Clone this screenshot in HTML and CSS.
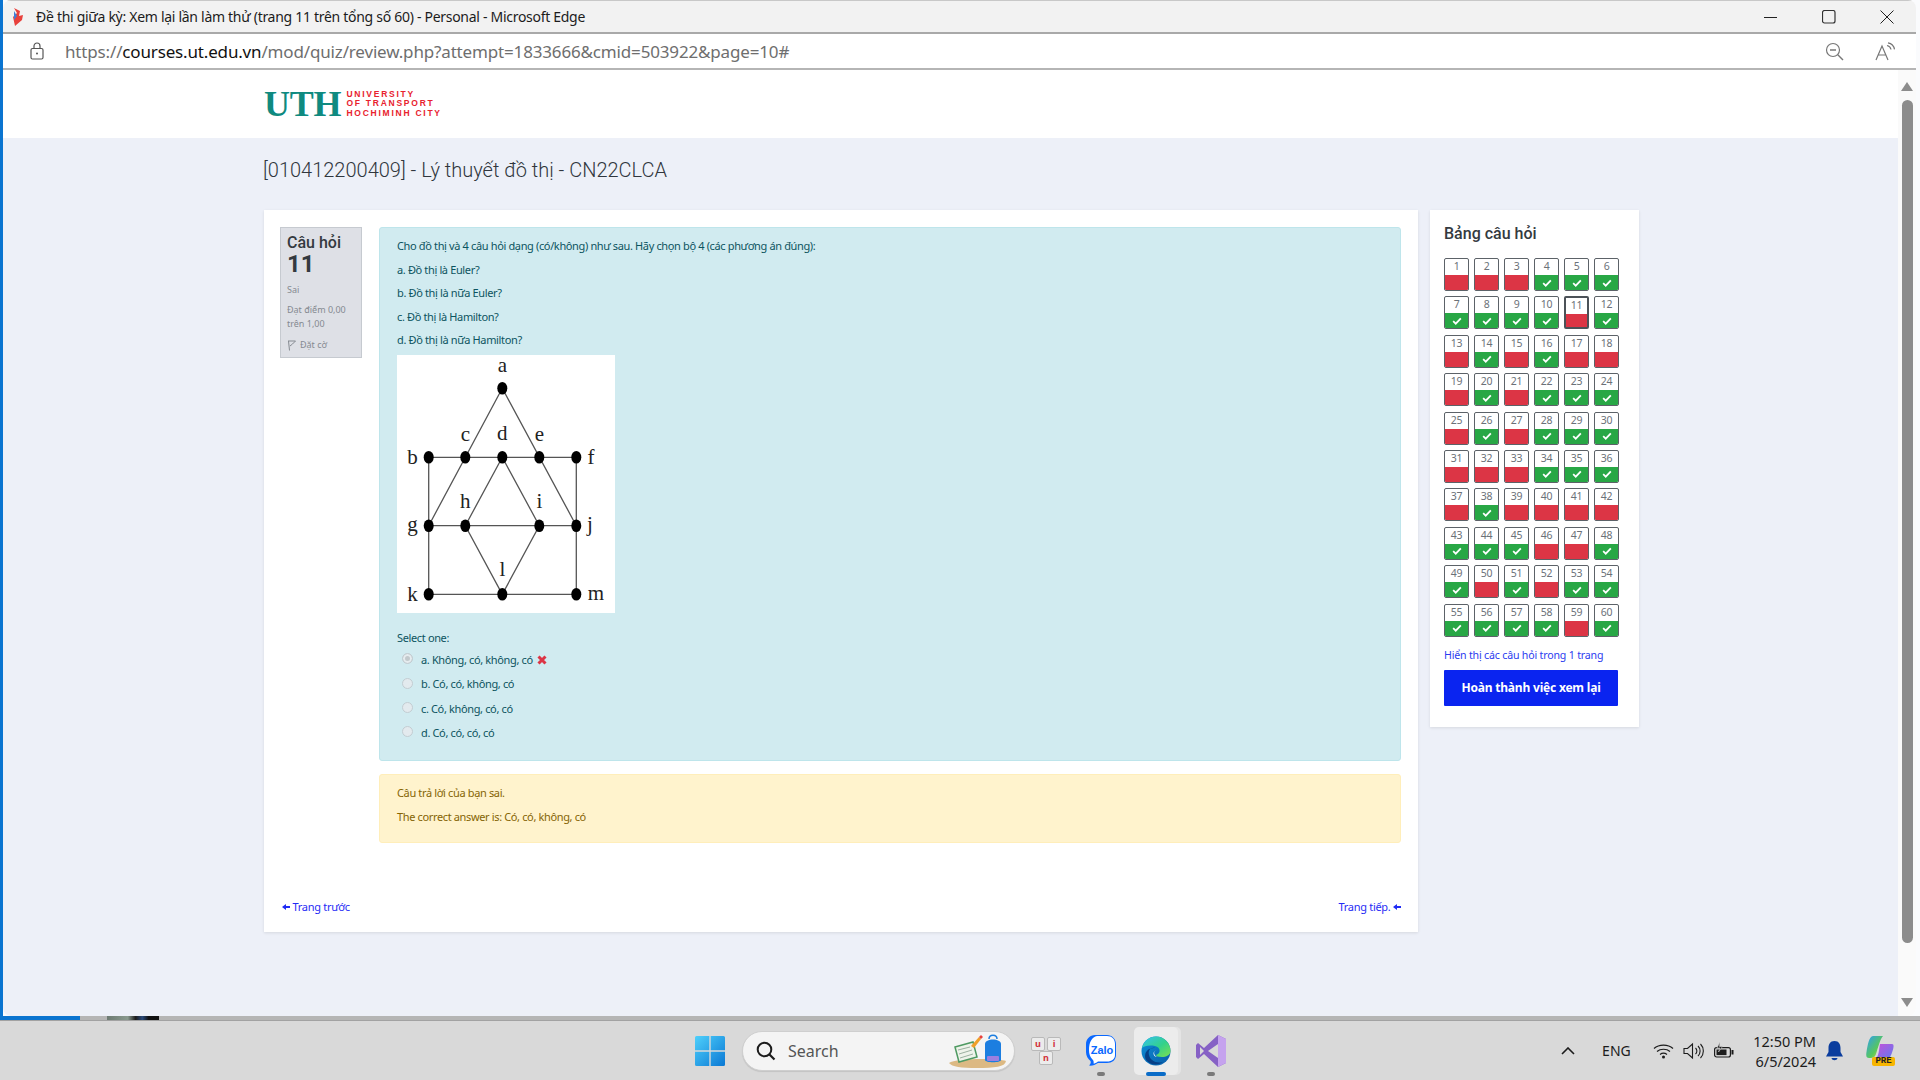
FILE: index.html
```html
<!DOCTYPE html>
<html lang="vi">
<head>
  <meta charset="UTF-8">
  <title>Đề thi giữa kỳ: Xem lại lần làm thử</title>
  <link rel="stylesheet" href="styles.css">
</head>
<body>
  <svg class="defs" width="0" height="0">
    <symbol id="tick" viewBox="0 0 12 10"><path d="M1.2 5.2 4.4 8.3 10.8 1.6" fill="none" stroke="#fff" stroke-width="2.2"/></symbol>
  </svg>

  <div class="desktop">
    <div class="window-row">
      <div class="edge-left"></div>
      <div class="window">
        <div class="titlebar">
          <svg class="favicon" width="14" height="20" viewBox="0 0 14 20"><path d="M3 1 6 6 2 10 4 19 11 13 12 8 8 9 9 4Z" fill="#e8413c"/><path d="M3 4 6 9 3 13Z" fill="#3f7fd6"/></svg>
          <span class="title-text">Đề thi giữa kỳ: Xem lại lần làm thử (trang 11 trên tổng số 60) - Personal - Microsoft Edge</span>
          <div class="win-btns">
            <svg width="14" height="14" viewBox="0 0 14 14"><path d="M0 7.5H13" stroke="#222" stroke-width="1"/></svg>
            <svg width="14" height="14" viewBox="0 0 14 14"><rect x=".5" y=".5" width="12.5" height="12.5" rx="2" fill="none" stroke="#333" stroke-width="1.2"/></svg>
            <svg width="14" height="14" viewBox="0 0 14 14"><path d="M.5.5 13.5 13.5M13.5.5.5 13.5" stroke="#222" stroke-width="1"/></svg>
          </div>
        </div>

        <div class="addressbar">
          <svg class="lock" width="14" height="18" viewBox="0 0 14 18"><rect x="1" y="6.5" width="12" height="10.5" rx="1.5" fill="none" stroke="#555" stroke-width="1.2"/><path d="M4 6.5V4a3 3 0 0 1 6 0v2.500" fill="none" stroke="#555" stroke-width="1.2"/><circle cx="7" cy="11.500" r="1" fill="#555"/></svg>
          <span class="url">https://<b>courses.ut.edu.vn</b>/mod/quiz/review.php?attempt=1833666&amp;cmid=503922&amp;page=10#</span>
          <div class="addr-tools">
            <svg width="19" height="19" viewBox="0 0 19 19"><circle cx="8" cy="8" r="6.500" fill="none" stroke="#777" stroke-width="1.200"/><path d="M5 8H11" stroke="#777" stroke-width="1.400"/><path d="M12.800 12.800 18 18" stroke="#777" stroke-width="1.400"/></svg>
            <svg width="21" height="19" viewBox="0 0 21 19"><path d="M1 18 7 4 13 18M3.500 13H10.500" fill="none" stroke="#777" stroke-width="1.200"/><path d="M12 3.500a5 5 0 0 1 4 4M13 .8a8 8 0 0 1 6.500 6.500" fill="none" stroke="#777" stroke-width="1.200"/></svg>
          </div>
        </div>

        <div class="viewport">
          <div class="page">
            <header class="site-header">
              <div class="logo">
                <span class="logo-mark">UTH</span>
                <span class="logo-name">UNIVERSITY<br>OF TRANSPORT<br>HOCHIMINH CITY</span>
              </div>
            </header>

            <h1 class="course-title">[010412200409] - Lý thuyết đồ thị - CN22CLCA</h1>

            <div class="columns">
              <main class="card">
                <div class="question">
                  <div class="qinfo">
                    <div class="qlabel">Câu hỏi</div>
                    <div class="qnum">11</div>
                    <div class="qstate">Sai</div>
                    <div class="qgrade">Đạt điểm 0,00 trên 1,00</div>
                    <div class="qflag">
                      <svg width="9" height="11" viewBox="0 0 9 11"><path d="M1 1H8.500L5.500 4 3 6M1.500 1 2.500 10.500" fill="none" stroke="#858a91" stroke-width="1"/></svg>
                      Đặt cờ
                    </div>
                  </div>

                  <div class="qbody">
                    <div class="formulation">
                      <p>Cho đồ thị và 4 câu hỏi dạng (có/không) như sau. Hãy chọn bộ 4 (các phương án đúng):</p>
                      <p>a. Đồ thị là Euler?</p>
                      <p>b. Đồ thị là nữa Euler?</p>
                      <p>c. Đồ thị là Hamilton?</p>
                      <p>d. Đồ thị là nữa Hamilton?</p>
                      <svg class="graph" width="218" height="258" viewBox="0 0 218 258">
                        <g stroke="#555" stroke-width="1.300" fill="none">
                          <path d="M105.300 33.300 31.700 170.700M105.300 33.300 179.300 170.700"/>
                          <path d="M31.700 102.300H179.300M31.700 170.700H179.300M31.700 239.300H179.300"/>
                          <path d="M31.700 102.300V239.300M179.300 102.300V239.300"/>
                          <path d="M105.300 102.300 68.300 170.700 105.300 239.300 142.300 170.700Z"/>
                        </g>
                        <g fill="#000">
                          <ellipse cx="105.300" cy="33.300" rx="5" ry="6.300"/>
                          <ellipse cx="31.700" cy="102.300" rx="5" ry="6.300"/>
                          <ellipse cx="68.300" cy="102.300" rx="5" ry="6.300"/>
                          <ellipse cx="105.300" cy="102.300" rx="5" ry="6.300"/>
                          <ellipse cx="142.300" cy="102.300" rx="5" ry="6.300"/>
                          <ellipse cx="179.300" cy="102.300" rx="5" ry="6.300"/>
                          <ellipse cx="31.700" cy="170.700" rx="5" ry="6.300"/>
                          <ellipse cx="68.300" cy="170.700" rx="5" ry="6.300"/>
                          <ellipse cx="142.300" cy="170.700" rx="5" ry="6.300"/>
                          <ellipse cx="179.300" cy="170.700" rx="5" ry="6.300"/>
                          <ellipse cx="31.700" cy="239.300" rx="5" ry="6.300"/>
                          <ellipse cx="105.300" cy="239.300" rx="5" ry="6.300"/>
                          <ellipse cx="179.300" cy="239.300" rx="5" ry="6.300"/>
                        </g>
                        <g class="graph-labels" text-anchor="middle">
                          <text x="105.300" y="17">a</text>
                          <text x="15.500" y="109">b</text>
                          <text x="68.300" y="86">c</text>
                          <text x="105.300" y="85">d</text>
                          <text x="142.300" y="86">e</text>
                          <text x="194" y="109">f</text>
                          <text x="15.500" y="176">g</text>
                          <text x="68.300" y="153">h</text>
                          <text x="142.300" y="153">i</text>
                          <text x="193" y="176">j</text>
                          <text x="15.500" y="246">k</text>
                          <text x="105.300" y="221">l</text>
                          <text x="199" y="245">m</text>
                        </g>
                      </svg>

                      <div class="select-one">Select one:</div>
                      <label class="answer"><span class="radio picked"></span>a. Không, có, không, có <svg class="wrong" width="10" height="10" viewBox="0 0 10 10"><path d="M1.500 1.500 8.500 8.500M8.500 1.500 1.500 8.500" stroke="#dc3545" stroke-width="3"/></svg></label>
                      <label class="answer"><span class="radio"></span>b. Có, có, không, có</label>
                      <label class="answer"><span class="radio"></span>c. Có, không, có, có</label>
                      <label class="answer"><span class="radio"></span>d. Có, có, có, có</label>
                    </div>

                    <div class="feedback">
                      <p>Câu trả lời của bạn sai.</p>
                      <p>The correct answer is: Có, có, không, có</p>
                    </div>
                  </div>
                </div>

                <div class="pager">
                  <a href="#"><svg class="nav-arrow" width="8" height="6" viewBox="0 0 8 6"><path d="M0 3 4 0V2H8V4H4V6Z" fill="#1f2bf5"/></svg> Trang trước</a>
                  <a href="#">Trang tiếp. <svg class="nav-arrow" width="8" height="6" viewBox="0 0 8 6"><path d="M0 3 4 0V2H8V4H4V6Z" fill="#1f2bf5"/></svg></a>
                </div>
              </main>

              <aside class="card side">
                <h2>Bảng câu hỏi</h2>
                <div class="qgrid">
                  <a class="qn bad"><span>1</span><i></i></a>
                  <a class="qn bad"><span>2</span><i></i></a>
                  <a class="qn bad"><span>3</span><i></i></a>
                  <a class="qn ok"><span>4</span><i><svg><use href="#tick"/></svg></i></a>
                  <a class="qn ok"><span>5</span><i><svg><use href="#tick"/></svg></i></a>
                  <a class="qn ok"><span>6</span><i><svg><use href="#tick"/></svg></i></a>
                  <a class="qn ok"><span>7</span><i><svg><use href="#tick"/></svg></i></a>
                  <a class="qn ok"><span>8</span><i><svg><use href="#tick"/></svg></i></a>
                  <a class="qn ok"><span>9</span><i><svg><use href="#tick"/></svg></i></a>
                  <a class="qn ok"><span>10</span><i><svg><use href="#tick"/></svg></i></a>
                  <a class="qn bad current"><span>11</span><i></i></a>
                  <a class="qn ok"><span>12</span><i><svg><use href="#tick"/></svg></i></a>
                  <a class="qn bad"><span>13</span><i></i></a>
                  <a class="qn ok"><span>14</span><i><svg><use href="#tick"/></svg></i></a>
                  <a class="qn bad"><span>15</span><i></i></a>
                  <a class="qn ok"><span>16</span><i><svg><use href="#tick"/></svg></i></a>
                  <a class="qn bad"><span>17</span><i></i></a>
                  <a class="qn bad"><span>18</span><i></i></a>
                  <a class="qn bad"><span>19</span><i></i></a>
                  <a class="qn ok"><span>20</span><i><svg><use href="#tick"/></svg></i></a>
                  <a class="qn bad"><span>21</span><i></i></a>
                  <a class="qn ok"><span>22</span><i><svg><use href="#tick"/></svg></i></a>
                  <a class="qn ok"><span>23</span><i><svg><use href="#tick"/></svg></i></a>
                  <a class="qn ok"><span>24</span><i><svg><use href="#tick"/></svg></i></a>
                  <a class="qn bad"><span>25</span><i></i></a>
                  <a class="qn ok"><span>26</span><i><svg><use href="#tick"/></svg></i></a>
                  <a class="qn bad"><span>27</span><i></i></a>
                  <a class="qn ok"><span>28</span><i><svg><use href="#tick"/></svg></i></a>
                  <a class="qn ok"><span>29</span><i><svg><use href="#tick"/></svg></i></a>
                  <a class="qn ok"><span>30</span><i><svg><use href="#tick"/></svg></i></a>
                  <a class="qn bad"><span>31</span><i></i></a>
                  <a class="qn bad"><span>32</span><i></i></a>
                  <a class="qn bad"><span>33</span><i></i></a>
                  <a class="qn ok"><span>34</span><i><svg><use href="#tick"/></svg></i></a>
                  <a class="qn ok"><span>35</span><i><svg><use href="#tick"/></svg></i></a>
                  <a class="qn ok"><span>36</span><i><svg><use href="#tick"/></svg></i></a>
                  <a class="qn bad"><span>37</span><i></i></a>
                  <a class="qn ok"><span>38</span><i><svg><use href="#tick"/></svg></i></a>
                  <a class="qn bad"><span>39</span><i></i></a>
                  <a class="qn bad"><span>40</span><i></i></a>
                  <a class="qn bad"><span>41</span><i></i></a>
                  <a class="qn bad"><span>42</span><i></i></a>
                  <a class="qn ok"><span>43</span><i><svg><use href="#tick"/></svg></i></a>
                  <a class="qn ok"><span>44</span><i><svg><use href="#tick"/></svg></i></a>
                  <a class="qn ok"><span>45</span><i><svg><use href="#tick"/></svg></i></a>
                  <a class="qn bad"><span>46</span><i></i></a>
                  <a class="qn bad"><span>47</span><i></i></a>
                  <a class="qn ok"><span>48</span><i><svg><use href="#tick"/></svg></i></a>
                  <a class="qn ok"><span>49</span><i><svg><use href="#tick"/></svg></i></a>
                  <a class="qn bad"><span>50</span><i></i></a>
                  <a class="qn ok"><span>51</span><i><svg><use href="#tick"/></svg></i></a>
                  <a class="qn bad"><span>52</span><i></i></a>
                  <a class="qn ok"><span>53</span><i><svg><use href="#tick"/></svg></i></a>
                  <a class="qn ok"><span>54</span><i><svg><use href="#tick"/></svg></i></a>
                  <a class="qn ok"><span>55</span><i><svg><use href="#tick"/></svg></i></a>
                  <a class="qn ok"><span>56</span><i><svg><use href="#tick"/></svg></i></a>
                  <a class="qn ok"><span>57</span><i><svg><use href="#tick"/></svg></i></a>
                  <a class="qn ok"><span>58</span><i><svg><use href="#tick"/></svg></i></a>
                  <a class="qn bad"><span>59</span><i></i></a>
                  <a class="qn ok"><span>60</span><i><svg><use href="#tick"/></svg></i></a>
                </div>
                <a class="one-page" href="#">Hiển thị các câu hỏi trong 1 trang</a>
                <a class="finish" href="#">Hoàn thành việc xem lại</a>
              </aside>
            </div>
          </div>

          <div class="scrollbar">
            <span class="arrow-up"></span>
            <span class="thumb"></span>
            <span class="arrow-down"></span>
          </div>
        </div>
      </div>
      <div class="edge-right"></div>
    </div>

    <div class="behind">
      <span class="behind-blue"></span>
      <span class="behind-pic"></span>
    </div>

    <footer class="taskbar">
      <svg class="start" width="30" height="30" viewBox="0 0 30 30">
        <defs><linearGradient id="winblue" x1="0" y1="0" x2="1" y2="1"><stop offset="0" stop-color="#4fd0fb"/><stop offset="1" stop-color="#0a78d4"/></linearGradient></defs>
        <path d="M0 1.500A1.500 1.500 0 0 1 1.500 0H14.300V14.300H0ZM15.700 0H28.500A1.500 1.500 0 0 1 30 1.500V14.300H15.700ZM0 15.700H14.300V30H1.500A1.500 1.500 0 0 1 0 28.500ZM15.700 15.700H30V28.500A1.500 1.500 0 0 1 28.500 30H15.700Z" fill="url(#winblue)"/>
      </svg>

      <div class="search">
        <svg width="20" height="20" viewBox="0 0 20 20"><circle cx="8.500" cy="8.500" r="6.800" fill="none" stroke="#1c1c1c" stroke-width="2"/><path d="M13.500 13.500 18.500 18.500" stroke="#1c1c1c" stroke-width="2.200"/></svg>
        <span>Search</span>
        <svg class="search-art" width="58" height="34" viewBox="0 0 58 34">
          <path d="M0 29C6 24 50 24 57 27 56 33 46 34 28 34 12 34 3 33 0 29Z" fill="#dcb983"/>
          <path d="M6 13 24 8 28 23 10 28Z" fill="#eef3ea" stroke="#4f9a62" stroke-width="1.500"/>
          <path d="M9 16 21 13M10 20 23 16M11 24 24 20" stroke="#9bb0a0" stroke-width="1"/>
          <path d="M22 12 30 3 32 5 25 14Z" fill="#f0a02a"/>
          <path d="M30 3 32 1 34 3 32 5Z" fill="#e8413c"/>
          <path d="M36 26V10C36 4 52 4 52 10V26C52 29 36 29 36 26Z" fill="#1c7ee0"/>
          <path d="M40 5C40 0 48 0 48 5" fill="none" stroke="#1c7ee0" stroke-width="1.500"/>
          <rect x="38" y="22" width="12" height="5" rx="1" fill="#9a7fe0"/>
        </svg>
      </div>

      <div class="keys">
        <span class="key">u</span><span class="key">i</span><span class="key key-low">n</span>
      </div>

      <div class="task-app zalo-app">
        <svg width="30" height="31" viewBox="0 0 30 31"><path d="M9 0H21C26 0 30 4 30 9V20C30 25 26 28 21 28H12C9 30 6 31 3 30.500 5 29 5 27 4.500 26 2 24 0 21 0 17V9C0 4 4 0 9 0Z" fill="#0a68ff"/><path d="M11 1H21C26 1 29 4 29 9V20C29 24 26 26.500 21 26.500H12C10 28 9 28.500 7.500 28.500 8 27 7.500 25.500 6.500 24.500 4 22 3 19 3 15 3 7 6 2 11 1Z" fill="#fff"/></svg>
        <span class="zalo-text">Zalo</span>
        <span class="run-dot"></span>
      </div>

      <div class="task-app edge-tile">
        <svg width="30" height="30" viewBox="0 0 30 30">
          <defs>
            <linearGradient id="edgeg" x1="0" y1="0" x2="1" y2="1"><stop offset="0" stop-color="#35c1f1"/><stop offset=".55" stop-color="#33d18a"/><stop offset="1" stop-color="#7ee04f"/></linearGradient>
            <linearGradient id="edgeb" x1="0" y1="0" x2="1" y2="1"><stop offset="0" stop-color="#0c8fd8"/><stop offset="1" stop-color="#0a5ca8"/></linearGradient>
          </defs>
          <circle cx="15" cy="15" r="14.500" fill="url(#edgeb)"/>
          <path d="M1 12C3 4 9 .5 15 .5 24 .5 29.500 8 29.500 15 29.500 19 25 21 21 21 17 21 15 20 15 19 20 18 20 11 14 10 8 9 3 10 1 12Z" fill="url(#edgeg)"/>
          <path d="M14 12C9 11 7 15 8 19 9 24 15 28 22 26 18 29 11 30 6 25 2 21 4 11 14 12Z" fill="#063f86"/>
          <path d="M15.500 14C12.500 14 12 19 16 21 12 21 11 15 15.500 14Z" fill="#fff"/>
        </svg>
        <span class="run-bar"></span>
      </div>

      <div class="task-app vs-app">
        <svg width="30" height="32" viewBox="0 0 30 32"><path d="M22 0 30 4V28L22 32 8 19 2 24 0 22V10L2 8 8 13Z" fill="#8661c5"/><path d="M22 0 30 4V28L22 32Z" fill="#c5a3ee"/><path d="M22 9V23L12 16Z" fill="#d9d9d9"/><path d="M4 12V20L8 16Z" fill="#d9d9d9"/></svg>
        <span class="run-dot"></span>
      </div>

      <div class="tray">
        <svg class="chevron" width="14" height="8" viewBox="0 0 14 8"><path d="M1 7 7 1 13 7" fill="none" stroke="#1c1c1c" stroke-width="1.600"/></svg>
        <span class="lang">ENG</span>
        <div class="tray-icons">
          <svg width="21" height="16" viewBox="0 0 21 16"><path d="M1 5.500C6 1 15 1 20 5.500M4 8.500C7.500 5.500 13.500 5.500 17 8.500M7 11.500C9 10 12 10 14 11.500" fill="none" stroke="#1c1c1c" stroke-width="1.200"/><circle cx="10.500" cy="14" r="1.500" fill="#1c1c1c"/></svg>
          <svg width="21" height="18" viewBox="0 0 21 18"><path d="M1 6.500H4.500L9.500 2V16L4.500 11.500H1Z" fill="none" stroke="#1c1c1c" stroke-width="1.100"/><path d="M12.500 6a4 4 0 0 1 0 6M15 4a7 7 0 0 1 0 10M17.500 2a10 10 0 0 1 0 14" fill="none" stroke="#1c1c1c" stroke-width="1.100"/></svg>
          <svg width="21" height="17" viewBox="0 0 21 17"><rect x="1.600" y="5.600" width="15.800" height="9.400" rx="2" fill="none" stroke="#1c1c1c" stroke-width="1.200"/><rect x="3.500" y="7.500" width="10" height="5.600" fill="#1c1c1c"/><rect x="18.500" y="8" width="2" height="4.500" fill="#1c1c1c"/><path d="M7 0 4 6H7L5.500 10 9.500 4.500H6.500Z" fill="#1c1c1c" stroke="#d9d9d9" stroke-width=".6"/></svg>
        </div>
        <div class="clock"><div>12:50 PM</div><div>6/5/2024</div></div>
        <svg class="bell" width="17" height="20" viewBox="0 0 17 20"><path d="M8.500 0C4 0 2.500 3.500 2.500 7V11L0 15.500H17L14.500 11V7C14.500 3.500 13 0 8.500 0Z" fill="#0b3d9e"/><path d="M5.500 17H11.500C11 20 6 20 5.500 17Z" fill="#0b3d9e"/></svg>
        <div class="copilot">
          <svg width="28" height="24" viewBox="0 0 28 24">
            <defs>
              <linearGradient id="copa" x1="0" y1="0" x2="1" y2="1"><stop offset="0" stop-color="#2f9df2"/><stop offset=".6" stop-color="#58c85a"/><stop offset="1" stop-color="#e9d94a"/></linearGradient>
              <linearGradient id="copb" x1="0" y1="0" x2="1" y2="1"><stop offset="0" stop-color="#c74fd8"/><stop offset="1" stop-color="#5f7cf0"/></linearGradient>
            </defs>
            <path d="M7 0H17C14 3 12 12 10 18 9 21 7 22 5 22H3C0 22 0 19 .5 16 1.500 10 3 0 7 0Z" fill="url(#copa)"/>
            <path d="M14 8H26C29 8 27 14 25.500 18 24 22 22 23 20 23H9C13 22 13 12 14 8Z" fill="url(#copb)"/>
          </svg>
          <span class="pre">PRE</span>
        </div>
      </div>
    </footer>
  </div>
</body>
</html>
```

FILE: styles.css
```css
* {
  box-sizing: border-box;
}

html, body {
  margin: 0;
  height: 100%;
}

body {
  font-family: "Noto Sans", "Open Sans", sans-serif;
  overflow: hidden;
}

.defs {
  display: none;
}

a {
  text-decoration: none;
}

.desktop {
  width: 1920px;
  height: 1080px;
  display: flex;
  flex-direction: column;
}

.window-row {
  height: 1016px;
  display: flex;
  background: #fafbfd;
}

.edge-left {
  width: 3px;
  background: #0a74d0;
}

.edge-right {
  width: 4px;
}

.window {
  flex: 1;
  min-width: 0;
  display: flex;
  flex-direction: column;
  border-radius: 8px 8px 8px 8px;
  overflow: hidden;
  background: #fff;
}

/* browser chrome */
.titlebar {
  height: 34px;
  background: #f2f2f2;
  border-top: 1px solid #c8c8c8;
  border-bottom: 2px solid #a9a9a9;
  display: flex;
  align-items: center;
  padding-left: 8px;
}

.favicon {
  margin-right: 11px;
}

.title-text {
  font-size: 14px;
  color: #1c1c1c;
  letter-spacing: -0.29px;
}

.win-btns {
  margin-left: auto;
  display: flex;
  gap: 44px;
  padding-right: 22px;
  align-items: center;
}

.addressbar {
  height: 36px;
  background: #fff;
  border-bottom: 2px solid #b5b5b5;
  display: flex;
  align-items: center;
  padding-left: 27px;
}

.url {
  margin-left: 21px;
  font-size: 17px;
  color: #6e6e6e;
  letter-spacing: -0.16px;
}

.url b {
  font-weight: 400;
  color: #111;
}

.addr-tools {
  margin-left: auto;
  display: flex;
  gap: 31px;
  padding-right: 20px;
  align-items: center;
}

.viewport {
  flex: 1;
  display: flex;
  min-height: 0;
}

.page {
  flex: 1;
  background: #edf0f8;
  min-width: 0;
}

/* site header */
.site-header {
  height: 68px;
  background: #fff;
  padding-left: 261px;
  display: flex;
  align-items: center;
}

.logo {
  display: flex;
  align-items: center;
  gap: 5px;
}

.logo-mark {
  font-family: "Liberation Serif", serif;
  font-weight: 700;
  font-size: 36px;
  line-height: 30px;
  color: #0f8a80;
  letter-spacing: -0.2px;
}

.logo-name {
  font-family: "Liberation Sans", sans-serif;
  font-weight: 700;
  font-size: 8.500px;
  line-height: 9.500px;
  letter-spacing: 1.750px;
  color: #e8222e;
}

.course-title {
  margin: 0 0 0 260px;
  height: 72px;
  padding-top: 19px;
  font-family: Roboto, sans-serif;
  font-weight: 300;
  font-size: 20px;
  line-height: 26px;
  color: #30363d;
}

.columns {
  display: flex;
  align-items: flex-start;
  gap: 12px;
  padding-left: 261px;
}

.card {
  background: #fff;
  box-shadow: 0 1px 3px rgba(0, 0, 0, 0.1);
}

main.card {
  width: 1154px;
  padding: 17px 17px 16px 16px;
}

.question {
  display: flex;
  align-items: flex-start;
  gap: 17px;
}

/* question info */
.qinfo {
  width: 82px;
  height: 131px;
  flex: none;
  background: #dee0e6;
  border: 1px solid #c6cad0;
  padding: 6px 6px;
  color: #858a91;
  font-size: 9px;
}

.qlabel {
  font-family: Roboto, sans-serif;
  font-size: 16px;
  font-weight: 500;
  line-height: 18px;
  color: #343a40;
}

.qnum {
  font-family: Roboto, sans-serif;
  font-size: 24px;
  font-weight: 700;
  line-height: 24px;
  color: #343a40;
}

.qstate {
  margin-top: 8px;
  line-height: 12px;
}

.qgrade {
  margin-top: 7px;
  line-height: 14px;
}

.qflag {
  margin-top: 7px;
  display: flex;
  align-items: center;
  gap: 4px;
  line-height: 14px;
}

.qbody {
  flex: 1;
  min-width: 0;
  font-size: 11px;
  letter-spacing: -0.36px;
}

.formulation {
  background: #d1ebf0;
  border: 1px solid #bee5eb;
  border-radius: 3px;
  padding: 6px 17px 15px;
  color: #0c5460;
  line-height: 23.500px;
}

.formulation p {
  margin: 0;
}

.graph {
  display: block;
  margin-top: 3px;
  background: #fff;
}

.graph-labels {
  font-family: "Liberation Serif", serif;
  font-size: 21px;
  letter-spacing: 0;
  fill: #222;
}

.select-one {
  margin-top: 15px;
  line-height: 20px;
}

.answer {
  display: flex;
  align-items: center;
  height: 24.400px;
  padding-left: 5px;
}

.radio {
  width: 11px;
  height: 11px;
  border-radius: 50%;
  background: #e3eaee;
  border: 1px solid #c3cdd2;
  margin-right: 8px;
  margin-top: -2px;
  flex: none;
}

.radio.picked {
  background: #c2c9cc;
  box-shadow: inset 0 0 0 2px #e6ecef;
}

.wrong {
  margin-left: 4px;
}

.feedback {
  margin-top: 13px;
  background: #fff3cd;
  border: 1px solid #ffeeba;
  border-radius: 3px;
  padding: 6px 17px 13px;
  color: #856404;
  line-height: 24px;
  height: 69px;
}

.feedback p {
  margin: 0;
}

.pager {
  margin-top: 53px;
  height: 20px;
  display: flex;
  justify-content: space-between;
  align-items: center;
  font-size: 11px;
  letter-spacing: -0.3px;
  padding-left: 2px;
}

.pager a {
  color: #1f2bf5;
}

.nav-arrow {
  margin-bottom: 1px;
}

/* navigation panel */
.side {
  width: 209px;
  padding: 10px 14px 21px;
}

.side h2 {
  margin: 0 0 11px;
  font-family: Roboto, sans-serif;
  font-size: 16px;
  font-weight: 500;
  line-height: 27px;
  color: #343a40;
}

.qgrid {
  display: grid;
  grid-template-columns: repeat(6, 25px);
  column-gap: 5px;
  row-gap: 5.400px;
}

.qn {
  height: 33px;
  display: flex;
  flex-direction: column;
  background: #fff;
  border: 1px solid #5c6268;
  border-radius: 2px;
  overflow: hidden;
  font-size: 10.500px;
  color: #6b7178;
  letter-spacing: -0.3px;
}

.qn span {
  height: 16px;
  line-height: 15px;
  text-align: center;
}

.qn i {
  flex: 1;
  display: flex;
  align-items: center;
  justify-content: center;
}

.qn svg {
  width: 10px;
  height: 8px;
}

.qn.ok i {
  background: #28a745;
}

.qn.bad i {
  background: #dc3545;
}

.qn.current {
  border: 2px solid #4c5258;
}

.one-page {
  display: block;
  margin-top: 10.500px;
  font-size: 10.600px;
  line-height: 16px;
  letter-spacing: -0.18px;
  color: #2a3bf0;
}

.finish {
  display: block;
  margin-top: 7px;
  width: 174px;
  height: 36px;
  background: #0a24f0;
  border-radius: 1px;
  color: #fff;
  font-size: 12px;
  font-weight: 700;
  line-height: 35px;
  text-align: center;
  letter-spacing: -0.2px;
}

/* scrollbar */
.scrollbar {
  width: 18px;
  flex: none;
  background: #fafafa;
  display: flex;
  flex-direction: column;
  align-items: center;
  padding-top: 12px;
}

.arrow-up {
  width: 0;
  height: 0;
  border-left: 6px solid transparent;
  border-right: 6px solid transparent;
  border-bottom: 9px solid #8c8c8c;
}

.thumb {
  width: 11px;
  height: 843px;
  margin-top: 9px;
  background: #8c8c8c;
  border-radius: 6px;
}

.arrow-down {
  width: 0;
  height: 0;
  margin-top: 55px;
  border-left: 6px solid transparent;
  border-right: 6px solid transparent;
  border-top: 9px solid #8c8c8c;
}

/* sliver of the window behind */
.behind {
  height: 5px;
  background: #b5b5b5;
  display: flex;
  border-bottom: 1px solid #a2a2a2;
}

.behind-blue {
  width: 80px;
  background: #0a74d0;
}

.behind-pic {
  width: 52px;
  margin-left: 27px;
  background: linear-gradient(90deg, #6d7a72 0, #8a9a8f 40%, #1c1c1c 55%, #2a4a7a 68%, #111 80%, #111 100%);
}

/* taskbar */
.taskbar {
  flex: 1;
  background: #d9d9d9;
  display: flex;
  align-items: center;
  padding-left: 695px;
  color: #1c1c1c;
}

.start {
  margin-right: 17px;
}

.search {
  width: 273px;
  height: 40px;
  border-radius: 20px;
  background: #f4f4f4;
  border: 1px solid #cfcfcf;
  box-shadow: 0 1px 1px rgba(0, 0, 0, 0.1);
  display: flex;
  align-items: center;
  padding-left: 13px;
  margin-right: 16px;
}

.search span {
  margin-left: 12px;
  font-size: 16px;
  color: #555;
}

.search-art {
  margin-left: auto;
  margin-right: 7px;
}

.keys {
  width: 30px;
  height: 28px;
  display: grid;
  grid-template-columns: 14px 14px;
  column-gap: 2px;
  row-gap: 0;
  margin-right: 18px;
}

.key {
  height: 14px;
  background: #ececec;
  border-radius: 2px;
  border: 1px solid #b9b9b9;
  color: #d2343c;
  font-size: 9px;
  font-weight: 700;
  line-height: 11px;
  text-align: center;
}

.key-low {
  grid-column: 1 / 3;
  width: 14px;
  margin-left: 8px;
}

.task-app {
  position: relative;
  width: 44px;
  height: 48px;
  display: flex;
  align-items: center;
  justify-content: center;
}

.zalo-app {
  margin-right: 11px;
}

.zalo-text {
  position: absolute;
  left: 0;
  top: 0;
  width: 100%;
  font-family: "Liberation Sans", sans-serif;
  font-size: 11px;
  font-weight: 700;
  line-height: 46px;
  padding-left: 2px;
  text-align: center;
  color: #0a68ff;
}

.edge-tile {
  background: #ececec;
  border-radius: 5px;
  box-shadow: 3px 0 0 #e4e4e4;
  margin-right: 11px;
}

.run-dot {
  position: absolute;
  left: 18px;
  bottom: -1px;
  width: 8px;
  height: 4px;
  border-radius: 2px;
  background: #7a7a7a;
}

.run-bar {
  position: absolute;
  left: 12px;
  bottom: -1px;
  width: 20px;
  height: 4px;
  border-radius: 2px;
  background: #0a6cc8;
}

.tray {
  margin-left: auto;
  display: flex;
  align-items: center;
  padding-right: 25px;
}

.chevron {
  margin-right: 27px;
}

.lang {
  font-size: 14px;
  margin-right: 22px;
}

.tray-icons {
  display: flex;
  align-items: center;
  gap: 9px;
  margin-right: 19.500px;
}

.clock {
  font-size: 14.500px;
  line-height: 20px;
  text-align: right;
  margin-right: 10px;
}

.bell {
  margin-right: 23px;
}

.copilot {
  position: relative;
  width: 29px;
  height: 30px;
}

.pre {
  position: absolute;
  left: 6px;
  bottom: 0;
  width: 23px;
  height: 9px;
  background: #f7b500;
  border-radius: 2px;
  font-family: "Liberation Mono", monospace;
  font-size: 9px;
  font-weight: 700;
  line-height: 9px;
  text-align: center;
  color: #222;
}
```
